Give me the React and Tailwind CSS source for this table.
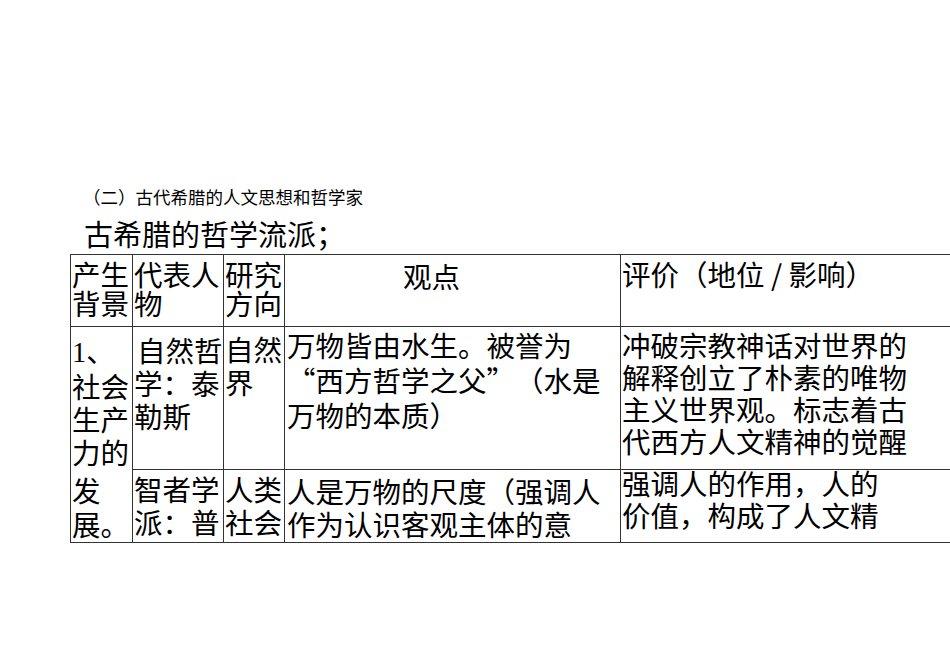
import React from "react";

const B = "border-r border-b border-[#333]";

export default function App() {
  return (
    <div
      lang="zh-CN"
      className="w-[950px] h-[672px] overflow-hidden bg-white text-black font-['Noto_Sans_CJK_SC','Noto_Sans_CJK_JP',sans-serif]"
    >
      <div className="pt-[187px] pl-[70px]">
        <div className="ml-[13px] text-[17.5px] leading-[20px] whitespace-nowrap">
          （二）古代希腊的人文思想和哲学家
        </div>
        <div className="ml-[14px] mt-[9px] text-[29px] leading-[34px] whitespace-nowrap">
          古希腊的哲学流派；
        </div>
        <div className="mt-[4px] grid grid-cols-[62px_91px_61px_336px_340px] grid-rows-[72px_143px_73px] border-t border-l border-[#333] text-[28.5px] whitespace-nowrap">
          {/* header */}
          <div className={`${B} pl-px pt-[4px] leading-[29px]`}>
            产生<br />背景
          </div>
          <div className={`${B} pl-px pt-[4px] leading-[29px]`}>
            代表人<br />物
          </div>
          <div className={`${B} pl-px pt-[4px] leading-[29px]`}>
            研究<br />方向
          </div>
          <div className={`${B} pl-[118px] pt-[6px] leading-[29px]`}>观点</div>
          <div className={`${B} pl-px pt-[4px] leading-[29px]`}>
            评价（地位 / 影响）
          </div>

          {/* row 2 */}
          <div className={`${B} row-span-2 pl-px pt-[6px]`}>
            <div className="leading-[33px]">
              <span className="font-['Liberation_Serif','Noto_Sans_CJK_SC',serif]">1</span>、<br />
              社会<br />生产<br />力的
            </div>
            <div className="mt-[5px] leading-[34px]">
              发<br />展。
            </div>
          </div>
          <div className={`${B} pl-px pt-[6px] leading-[33px]`}>
            <span className="pl-[3px]">自然哲</span>
            <br />学：泰<br />勒斯
          </div>
          <div className={`${B} pl-px pt-[5px] leading-[33px]`}>
            自然<br />界
          </div>
          <div className={`${B} pl-[2px] leading-[35px]`}>
            万物皆由水生。被誉为<br />
            <span className="inline-block w-[1em] text-right">“</span>西方哲学之父<span className="inline-block w-[1em] text-left">”</span>（水是<br />
            万物的本质）
          </div>
          <div className={`${B} pl-px pt-[2px] leading-[32px]`}>
            冲破宗教神话对世界的<br />解释创立了朴素的唯物<br />主义世界观。标志着古<br />代西方人文精神的觉醒
          </div>

          {/* row 3 */}
          <div className={`${B} pl-px pt-[2px] leading-[33px]`}>
            智者学<br />派：普
          </div>
          <div className={`${B} pl-px pt-[2px] leading-[33px]`}>
            人类<br />社会
          </div>
          <div className={`${B} pl-[2px] pt-[4px] leading-[33px]`}>
            人是万物的尺度（强调人<br />作为认识客观主体的意
          </div>
          <div className={`${B} pl-px leading-[32px]`}>
            <div className="-mt-[3px]">
              强调人的作用，人的<br />价值，构成了人文精
            </div>
          </div>
        </div>
      </div>
    </div>
  );
}
